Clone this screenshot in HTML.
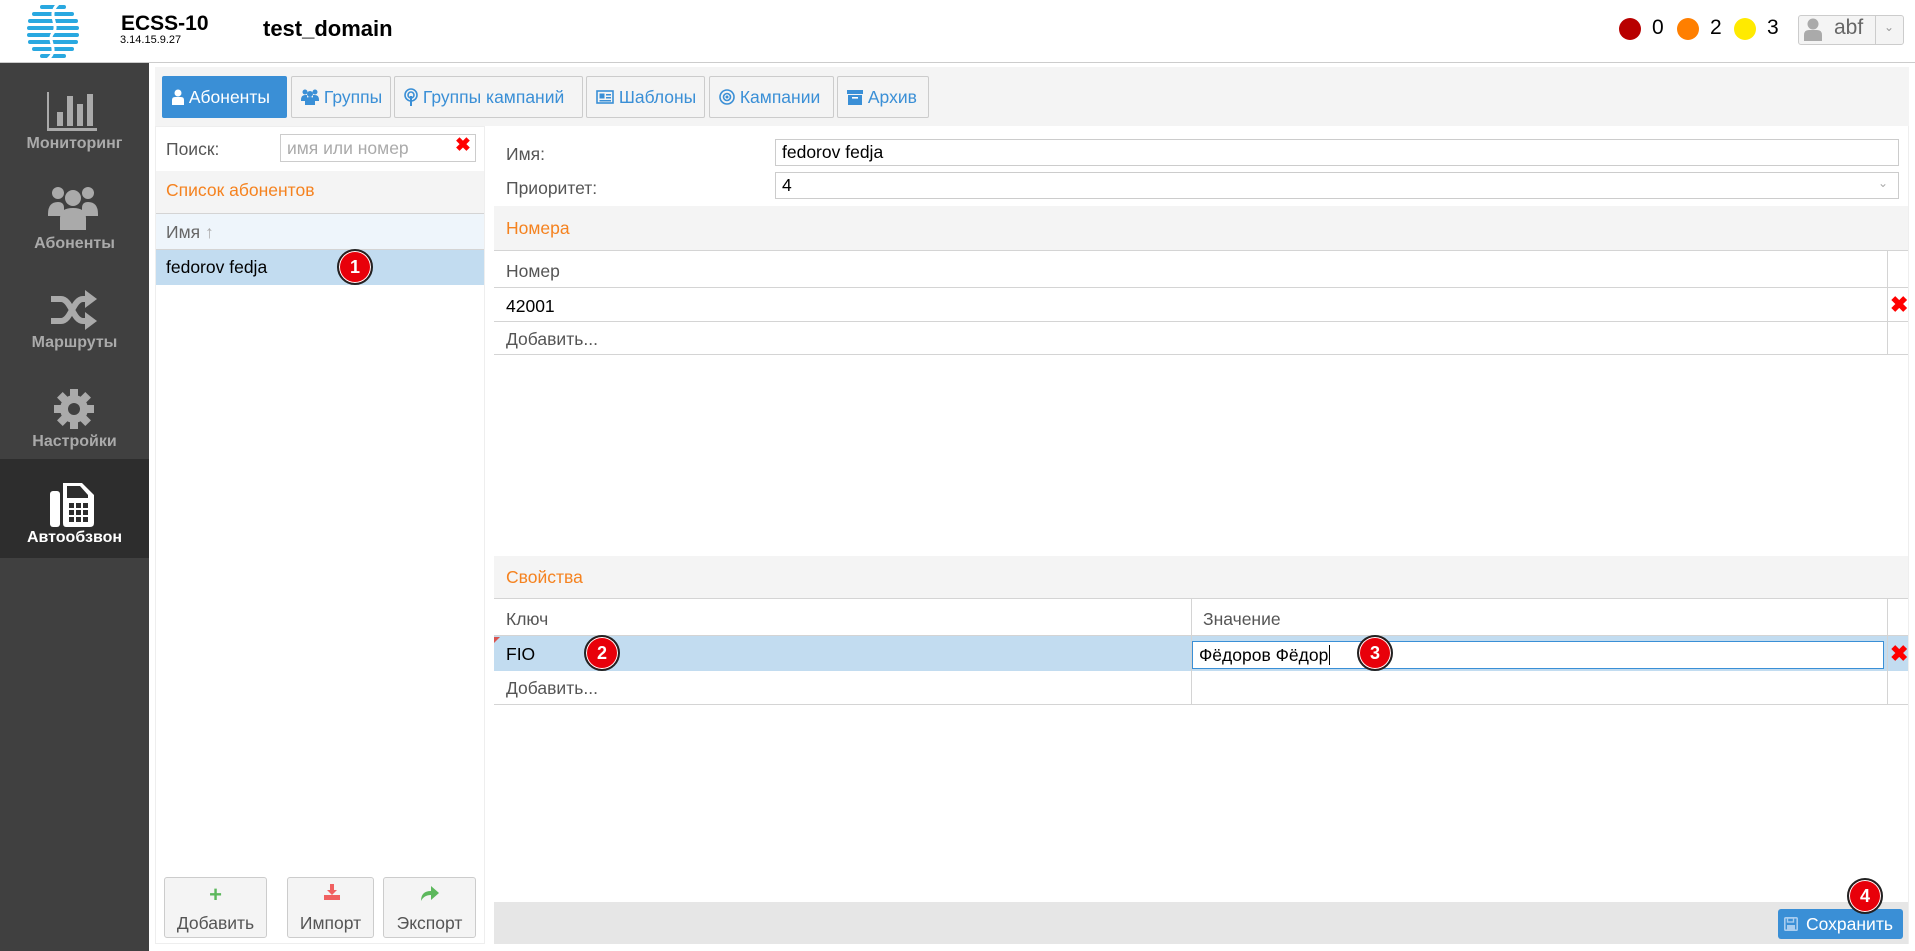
<!DOCTYPE html>
<html><head><meta charset="utf-8"><style>
*{box-sizing:border-box;margin:0;padding:0}
body{width:1915px;height:951px;position:relative;overflow:hidden;background:#fff;font-family:"Liberation Sans",Arial,sans-serif;font-size:17.5px;color:#000}
.a{position:absolute}
.side{left:0;top:63px;width:149px;height:888px;background:#404040}
.si{position:absolute;left:0;width:149px;height:99px;text-align:center;color:#aaa;font-weight:bold;font-size:16px}
.si svg{position:absolute;left:47px;top:14px}
.si span{position:absolute;left:0;right:0;top:62px}
.tab{position:absolute;top:76px;height:42px;border:1px solid #ccc;background:#f4f4f4;color:#3a8fd6;font-size:17.5px;line-height:40px;padding-left:9px;white-space:nowrap;border-radius:2px}
.lbl{color:#555;font-size:17.5px}
.inp{position:absolute;border:1px solid #ccc;background:#fff;height:28px;line-height:26px;padding-left:6px;font-size:17.5px}
.hl{position:absolute;height:1px;background:#d4d4d4}
.vl{position:absolute;width:1px;background:#d4d4d4}
.or{color:#f5821f;font-size:17.5px}
.badge{position:absolute;width:36px;height:36px;border-radius:50%;background:#e8000a;border:2px solid #222;box-shadow:0 0 0 1px #fff inset;color:#fff;font-weight:bold;font-size:18px;text-align:center;line-height:32px}
.btn{position:absolute;top:877px;height:61px;border:1px solid #ccc;border-radius:3px;background:#f4f4f4;color:#555;text-align:center;font-size:17.5px}
.btn span{position:absolute;left:0;right:0;top:35px}
.x{position:absolute;color:#f00;font-weight:bold;font-size:22px}
</style></head><body>
<!-- header -->
<svg class="a" style="left:26px;top:3px" width="54" height="57" viewBox="0 0 54 57">
<g fill="#29a8e0">
<rect x="14" y="2" width="26" height="4" rx="2"/><rect x="6" y="9" width="42" height="4" rx="2"/><rect x="2" y="16" width="50" height="4" rx="2"/><rect x="1" y="23" width="52" height="4" rx="2"/><rect x="1" y="30" width="52" height="4" rx="2"/><rect x="2" y="37" width="50" height="4" rx="2"/><rect x="6" y="44" width="42" height="4" rx="2"/><rect x="14" y="51" width="26" height="4" rx="2"/></g>
<path d="M32 1 C20 12,34 22,27 30 C20 38,34 46,22 56" stroke="#fff" stroke-width="3" fill="none"/>
</svg>
<div class="a" style="left:121px;top:12px;font-weight:bold;font-size:21px">ECSS-10</div>
<div class="a" style="left:120px;top:34px;font-size:11px">3.14.15.9.27</div>
<div class="a" style="left:263px;top:16px;font-weight:bold;font-size:22px">test_domain</div>
<div class="a" style="left:1619px;top:18px;width:22px;height:22px;border-radius:50%;background:#b80000"></div>
<div class="a" style="left:1652px;top:16px;font-size:21px">0</div>
<div class="a" style="left:1677px;top:18px;width:22px;height:22px;border-radius:50%;background:#ff7f00"></div>
<div class="a" style="left:1710px;top:16px;font-size:21px">2</div>
<div class="a" style="left:1734px;top:18px;width:22px;height:22px;border-radius:50%;background:#ffea00"></div>
<div class="a" style="left:1767px;top:16px;font-size:21px">3</div>
<div class="a" style="left:1798px;top:15px;width:106px;height:30px;border:1px solid #ccc;border-radius:3px;background:#f4f4f4"></div>
<div class="vl" style="left:1875px;top:16px;height:28px;background:#ccc"></div>
<svg class="a" style="left:1803px;top:18px" width="20" height="24" viewBox="0 0 20 24"><circle cx="10" cy="6" r="5.5" fill="#aaa"/><path d="M1 23 V17 Q1 12 6 12 H14 Q19 12 19 17 V23Z" fill="#aaa"/></svg>
<div class="a" style="left:1834px;top:16px;font-size:21px;color:#666">abf</div>
<div class="a" style="left:1884px;top:20px;font-size:12px;color:#999">&#8964;</div>
<div class="hl" style="left:0;top:62px;width:1915px;background:#ccc"></div>
<!-- sidebar -->
<div class="a side">
<div class="si" style="top:0">
<svg width="54" height="42" viewBox="0 0 54 42" style="left:47px;top:29px"><g fill="#aaa"><rect x="0" y="0" width="2" height="38"/><rect x="0" y="36" width="50" height="3"/><rect x="10" y="20" width="6" height="14"/><rect x="20" y="4" width="6" height="30"/><rect x="30" y="12" width="6" height="22"/><rect x="40" y="2" width="6" height="32"/></g></svg>
<span style="top:72px">Мониторинг</span></div>
<div class="si" style="top:99px">
<svg width="50" height="44" viewBox="0 0 50 44" style="left:48px;top:24px"><g fill="#aaa"><circle cx="10" cy="7" r="6"/><circle cx="40" cy="7" r="6"/><circle cx="25" cy="12" r="8"/><path d="M0 28 Q0 16 10 16 Q16 16 16 22 V30 H0Z"/><path d="M50 28 Q50 16 40 16 Q34 16 34 22 V30 H50Z"/><path d="M12 44 V32 Q12 22 25 22 Q38 22 38 32 V44Z"/></g></svg>
<span style="top:73px">Абоненты</span></div>
<div class="si" style="top:198px">
<svg width="46" height="40" viewBox="0 0 46 40" style="left:51px;top:29px"><g stroke="#aaa" stroke-width="6" fill="none"><path d="M0 9 H10 C20 9,22 31,32 31 H38"/><path d="M0 31 H10 C20 31,22 9,32 9 H38"/></g><g fill="#aaa"><path d="M34 0 L46 9 L34 18Z"/><path d="M34 22 L46 31 L34 40Z"/></g></svg>
<span style="top:73px">Маршруты</span></div>
<div class="si" style="top:297px">
<svg width="40" height="40" viewBox="0 0 40 40" style="left:54px;top:29px"><g fill="#aaa"><circle cx="20" cy="20" r="14"/><rect x="16" y="0" width="8" height="40"/><rect x="0" y="16" width="40" height="8"/><rect x="16" y="0" width="8" height="40" transform="rotate(45 20 20)"/><rect x="16" y="0" width="8" height="40" transform="rotate(-45 20 20)"/></g><circle cx="20" cy="20" r="6" fill="#404040"/></svg>
<span style="top:73px">Настройки</span></div>
<div class="si" style="top:396px;background:#2d2d2d;color:#fff">
<svg width="46" height="46" viewBox="0 0 46 46" style="left:50px;top:22px"><rect x="0" y="10" width="10" height="36" rx="3" fill="#fff"/><path d="M13 2 H32 L44 14 V42 Q44 46 40 46 H16 Q13 46 13 42Z" fill="#fff"/><path d="M17 5 H30 L38 14 V17 H17Z" fill="#2d2d2d"/><g fill="#2d2d2d"><rect x="19" y="22" width="5" height="5"/><rect x="26" y="22" width="5" height="5"/><rect x="33" y="22" width="5" height="5"/><rect x="19" y="29" width="5" height="5"/><rect x="26" y="29" width="5" height="5"/><rect x="33" y="29" width="5" height="5"/><rect x="19" y="36" width="5" height="5"/><rect x="26" y="36" width="5" height="5"/><rect x="33" y="36" width="5" height="5"/></g></svg>
<span style="top:70px">Автообзвон</span></div>
</div>
<!-- tab bar -->
<div class="a" style="left:155px;top:67px;width:1754px;height:59px;background:#f4f4f4"></div>
<div class="tab" style="left:162px;width:125px;background:#3a8fd6;border-color:#3a8fd6;color:#fff">
<svg width="12" height="16" viewBox="0 0 12 16" style="vertical-align:-2px"><circle cx="6" cy="4" r="3.5" fill="#fff"/><path d="M0 16 V11 Q0 8 3 8 H9 Q12 8 12 11 V16Z" fill="#fff"/></svg> Абоненты</div>
<div class="tab" style="left:291px;width:100px"><svg width="18" height="16" viewBox="0 0 18 16" style="vertical-align:-2px"><g fill="#3a8fd6"><circle cx="4" cy="3" r="2.5"/><circle cx="14" cy="3" r="2.5"/><circle cx="9" cy="5" r="3"/><path d="M0 11 Q0 6 4 6 H6 V12 H0Z"/><path d="M18 11 Q18 6 14 6 H12 V12 H18Z"/><path d="M4 16 V12 Q4 8 9 8 Q14 8 14 12 V16Z"/></g></svg> Группы</div>
<div class="tab" style="left:394px;width:189px"><svg width="14" height="18" viewBox="0 0 14 18" style="vertical-align:-3px"><g fill="none" stroke="#3a8fd6" stroke-width="1.6"><circle cx="7" cy="7" r="6"/><circle cx="7" cy="7" r="3"/></g><rect x="6" y="8" width="2" height="10" fill="#3a8fd6"/></svg> Группы кампаний</div>
<div class="tab" style="left:586px;width:119px"><svg width="18" height="14" viewBox="0 0 18 14" style="vertical-align:-1px"><rect x="1" y="1" width="16" height="12" fill="none" stroke="#3a8fd6" stroke-width="1.6"/><rect x="3.5" y="3.5" width="5" height="5" fill="#3a8fd6"/><g fill="#3a8fd6"><rect x="10" y="4" width="5" height="1.5"/><rect x="10" y="7" width="5" height="1.5"/><rect x="3.5" y="10" width="11.5" height="1.5"/></g></svg> Шаблоны</div>
<div class="tab" style="left:709px;width:125px"><svg width="16" height="16" viewBox="0 0 16 16" style="vertical-align:-2px"><g fill="none" stroke="#3a8fd6" stroke-width="1.6"><circle cx="8" cy="8" r="7"/><circle cx="8" cy="8" r="3.5"/></g><circle cx="8" cy="8" r="1.5" fill="#3a8fd6"/></svg> Кампании</div>
<div class="tab" style="left:837px;width:92px"><svg width="16" height="16" viewBox="0 0 16 16" style="vertical-align:-2px"><rect x="0" y="1" width="16" height="4" fill="#3a8fd6"/><rect x="1" y="6" width="14" height="10" fill="#3a8fd6"/><rect x="5" y="8" width="6" height="1.6" fill="#fff"/></svg> Архив</div>
<!-- left panel -->
<div class="a" style="left:155px;top:126px;width:330px;height:818px;border:1px solid #eee;background:#fff"></div>
<div class="a lbl" style="left:166px;top:139px;color:#555">Поиск:</div>
<div class="inp" style="left:280px;top:134px;width:196px;color:#aaa">имя или номер</div>
<div class="x" style="left:455px;top:134px;font-size:19px">✖</div>
<div class="a" style="left:156px;top:171px;width:328px;height:42px;background:#f4f4f4"></div>
<div class="a or" style="left:166px;top:180px">Список абонентов</div>
<div class="hl" style="left:156px;top:213px;width:328px"></div>
<div class="a" style="left:156px;top:214px;width:328px;height:35px;background:#eef5fb"></div>
<div class="a" style="left:166px;top:222px;color:#666">Имя <span style="color:#aaa">↑</span></div>
<div class="hl" style="left:156px;top:249px;width:328px"></div>
<div class="a" style="left:156px;top:250px;width:328px;height:35px;background:#c2dcf0"></div>
<div class="a" style="left:166px;top:257px">fedorov fedja</div>
<div class="badge" style="left:337px;top:249px">1</div>
<div class="btn" style="left:164px;width:103px"><div class="a" style="left:0;right:0;top:4px;color:#5cb85c;font-size:22px;font-weight:bold">+</div><span>Добавить</span></div>
<div class="btn" style="left:287px;width:87px"><svg class="a" style="left:36px;top:6px" width="16" height="16" viewBox="0 0 16 16"><g fill="#f06060"><rect x="6" y="0" width="4" height="6"/><path d="M3 6 H13 L8 11Z"/><rect x="0" y="11" width="16" height="5"/></g></svg><span>Импорт</span></div>
<div class="btn" style="left:383px;width:93px"><svg class="a" style="left:37px;top:7px" width="18" height="16" viewBox="0 0 18 16"><path d="M0 16 Q0 6 10 6 V1 L18 8 L10 15 V10 Q3 10 0 16Z" fill="#5cb85c"/></svg><span>Экспорт</span></div>
<!-- right panel -->
<div class="a" style="left:493px;top:126px;width:1416px;height:818px;background:#fff;border-right:1px solid #eee"></div>
<div class="a lbl" style="left:506px;top:144px">Имя:</div>
<div class="inp" style="left:775px;top:139px;width:1124px;height:27px;line-height:25px">fedorov fedja</div>
<div class="a lbl" style="left:506px;top:178px">Приоритет:</div>
<div class="inp" style="left:775px;top:172px;width:1124px;height:27px;line-height:25px">4</div>
<div class="a" style="left:1878px;top:176px;color:#aaa;font-size:12px">&#8964;</div>
<div class="a" style="left:494px;top:206px;width:1414px;height:44px;background:#f4f4f4"></div>
<div class="a or" style="left:506px;top:218px">Номера</div>
<div class="hl" style="left:494px;top:250px;width:1414px"></div>
<div class="a lbl" style="left:506px;top:261px">Номер</div>
<div class="hl" style="left:494px;top:287px;width:1414px"></div>
<div class="a" style="left:506px;top:296px">42001</div>
<div class="x" style="left:1890px;top:292px">✖</div>
<div class="hl" style="left:494px;top:321px;width:1414px"></div>
<div class="a lbl" style="left:506px;top:329px">Добавить...</div>
<div class="hl" style="left:494px;top:354px;width:1414px"></div>
<div class="vl" style="left:1887px;top:251px;height:103px"></div>
<div class="a" style="left:494px;top:556px;width:1414px;height:42px;background:#f4f4f4"></div>
<div class="a or" style="left:506px;top:567px">Свойства</div>
<div class="hl" style="left:494px;top:598px;width:1414px"></div>
<div class="a lbl" style="left:506px;top:609px">Ключ</div>
<div class="a lbl" style="left:1203px;top:609px">Значение</div>
<div class="hl" style="left:494px;top:635px;width:1414px"></div>
<div class="a" style="left:494px;top:636px;width:1414px;height:35px;background:#c2dcf0"></div>
<div class="a" style="left:494px;top:637px;width:0;height:0;border-top:6px solid #d9534f;border-right:6px solid transparent"></div>
<div class="a" style="left:506px;top:644px">FIO</div>
<div class="badge" style="left:584px;top:635px">2</div>
<div class="inp" style="left:1192px;top:641px;width:692px;height:28px;border-color:#3a8fd6">Фёдоров Фёдор<span style="border-left:1px solid #000;margin-left:1px"></span></div>
<div class="badge" style="left:1357px;top:635px">3</div>
<div class="x" style="left:1890px;top:641px">✖</div>
<div class="a lbl" style="left:506px;top:678px">Добавить...</div>
<div class="hl" style="left:494px;top:704px;width:1414px"></div>
<div class="vl" style="left:1191px;top:599px;height:105px"></div>
<div class="vl" style="left:1887px;top:599px;height:105px"></div>
<div class="a" style="left:494px;top:902px;width:1414px;height:42px;background:#e6e6e6"></div>
<div class="a" style="left:1778px;top:909px;width:125px;height:30px;background:#3a8fd6;border-radius:3px;color:#fff;line-height:30px;padding-left:28px;font-size:17.5px">Сохранить</div>
<svg class="a" style="left:1784px;top:917px" width="14" height="14" viewBox="0 0 14 14"><rect x="0.8" y="0.8" width="12.4" height="12.4" rx="1" fill="none" stroke="#a9cdef" stroke-width="1.6"/><rect x="3.5" y="1" width="6" height="4" fill="none" stroke="#a9cdef" stroke-width="1.4"/><rect x="3" y="8" width="8" height="5" fill="#a9cdef"/></svg>
<div class="badge" style="left:1847px;top:878px">4</div>
</body></html>
